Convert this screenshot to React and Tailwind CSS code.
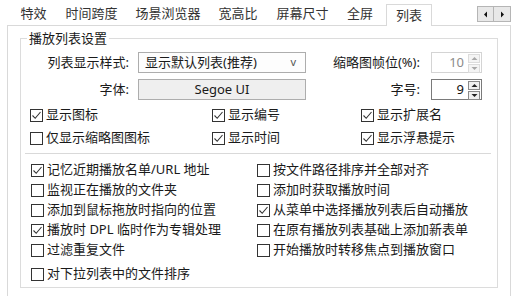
import React from "react";

// tab label + fixed width of its slot
const tabs = [
  ["特效", "w-[45px]"],
  ["时间跨度", "w-[71px]"],
  ["场景浏览器", "w-[82px]"],
  ["宽高比", "w-[58px]"],
  ["屏幕尺寸", "w-[71px]"],
  ["全屏", "w-[44px]"],
];

const topChecks = [
  { label: "显示图标", on: true },
  { label: "显示编号", on: true },
  { label: "显示扩展名", on: true },
  { label: "仅显示缩略图图标", on: false },
  { label: "显示时间", on: true },
  { label: "显示浮悬提示", on: true },
];

const listChecks = [
  { label: "记忆近期播放名单/URL 地址", on: true },
  { label: "按文件路径排序并全部对齐", on: false },
  { label: "监视正在播放的文件夹", on: false },
  { label: "添加时获取播放时间", on: false },
  { label: "添加到鼠标拖放时指向的位置", on: false },
  { label: "从菜单中选择播放列表后自动播放", on: true },
  { label: "播放时 DPL 临时作为专辑处理", on: true },
  { label: "在原有播放列表基础上添加新表单", on: false },
  { label: "过滤重复文件", on: false },
  { label: "开始播放时转移焦点到播放窗口", on: false },
];

const Check = ({ label, on }) => (
  <div className="flex h-[20px] items-center gap-[3px] whitespace-nowrap">
    <span className="flex h-[13px] w-[13px] shrink-0 items-center justify-center border border-[#333] bg-white">
      {on && (
        <svg width="11" height="11" viewBox="0 0 11 11">
          <path d="M1.5 5.5 L4.2 8.3 L9.5 2" fill="none" stroke="#333" strokeWidth="1.1" />
        </svg>
      )}
    </span>
    <span>{label}</span>
  </div>
);

const Spin = ({ value, disabled }) => (
  <div
    className={
      "flex h-[21px] w-[51px] border " +
      (disabled ? "border-[#d4d4d4] text-[#8c8c8c]" : "border-[#7a7a7a] text-[#111]")
    }
  >
    <div className="flex-1 pr-[4px] text-right leading-[19px]">{value}</div>
    <div className="flex w-[13px] flex-col gap-px py-px pr-px">
      {["M1.5 5 L4.5 2 L7.5 5 Z", "M1.5 2 L4.5 5 L7.5 2 Z"].map((d) => (
        <span
          key={d}
          className={
            "flex flex-1 items-center justify-center border " +
            (disabled ? "border-[#dcdcdc] bg-[#f4f4f4]" : "border-[#8a8a8a] bg-[#f0f0f0]")
          }
        >
          <svg width="9" height="7" viewBox="0 0 9 7">
            <path d={d} fill={disabled ? "#a8a8a8" : "#222"} />
          </svg>
        </span>
      ))}
    </div>
  </div>
);

export default function App() {
  return (
    <div className="h-[296px] w-[526px] overflow-hidden bg-white text-[13px] text-[#1a1a1a] font-['Noto_Sans','Noto_Sans_CJK_SC',sans-serif]">
      {/* tab strip */}
      <div className="flex h-[25px] pl-[11px]">
        {tabs.map(([t, w]) => (
          <div key={t} className={"shrink-0 pt-[4px] text-center leading-[18px] text-[#333] " + w}>
            {t}
          </div>
        ))}
        <div className="relative z-10 ml-[4px] mt-[4px] h-[22px] w-[46px] shrink-0 border border-b-0 border-[#d9d9d9] bg-white text-center leading-[20px] text-[#333]">
          列表
        </div>
        <div className="flex-1" />
        <div className="mr-[15px] mt-[6px] flex h-[16px]">
          <span className="flex w-[17px] items-center justify-center border border-[#b5b5b5] bg-[#e8e8e8]">
            <svg width="5" height="7" viewBox="0 0 5 7">
              <path d="M4 0.5 L1 3.5 L4 6.5 Z" fill="#111" />
            </svg>
          </span>
          <span className="flex w-[17px] items-center justify-center border border-l-0 border-[#b5b5b5] bg-[#e8e8e8]">
            <svg width="5" height="7" viewBox="0 0 5 7">
              <path d="M1 0.5 L4 3.5 L1 6.5 Z" fill="#111" />
            </svg>
          </span>
        </div>
      </div>

      {/* tab page */}
      <div className="ml-[7px] h-[300px] w-[504px] border border-[#d9d9d9] bg-white">
        <fieldset className="ml-[12px] mt-[4px] h-[258px] w-[478px] border border-[#dcdcdc]">
          <legend className="ml-[6px] px-[2px] leading-[16px]">播放列表设置</legend>

          <div className="mt-[6px] flex h-[21px] items-center">
            <div className="w-[110px] pr-[2px] text-right">列表显示样式:</div>
            <div className="ml-[7px] flex h-[21px] w-[168px] items-center justify-between border border-[#adadad] bg-[#fdfdfd] pl-[6px] pr-[9px]">
              <span>显示默认列表(推荐)</span>
              <span className="text-[11px] text-[#555]">v</span>
            </div>
            <div className="w-[114px] text-right">缩略图帧位(%):</div>
            <div className="ml-[11px]">
              <Spin value="10" disabled />
            </div>
          </div>

          <div className="mt-[6px] flex h-[21px] items-center">
            <div className="w-[110px] pr-[2px] text-right">字体:</div>
            <div className="ml-[7px] flex h-[21px] w-[168px] items-center justify-center border border-[#adadad] bg-[#efefef]">
              Segoe UI
            </div>
            <div className="w-[114px] text-right">字号:</div>
            <div className="ml-[11px]">
              <Spin value="9" />
            </div>
          </div>

          <div className="mt-[5px] grid grid-cols-[182px_149px_1fr] gap-y-[3px] pl-[9px]">
            {topChecks.map((c) => (
              <Check key={c.label} {...c} />
            ))}
          </div>

          <div className="ml-[4px] mt-[5px] h-px w-[466px] bg-[#d9d9d9]" />

          <div className="mt-[6px] grid grid-cols-[226px_1fr] pl-[10px]">
            {listChecks.map((c) => (
              <Check key={c.label} {...c} />
            ))}
          </div>
          <div className="mt-[4px] pl-[10px]">
            <Check label="对下拉列表中的文件排序" on={false} />
          </div>
        </fieldset>
      </div>
    </div>
  );
}
